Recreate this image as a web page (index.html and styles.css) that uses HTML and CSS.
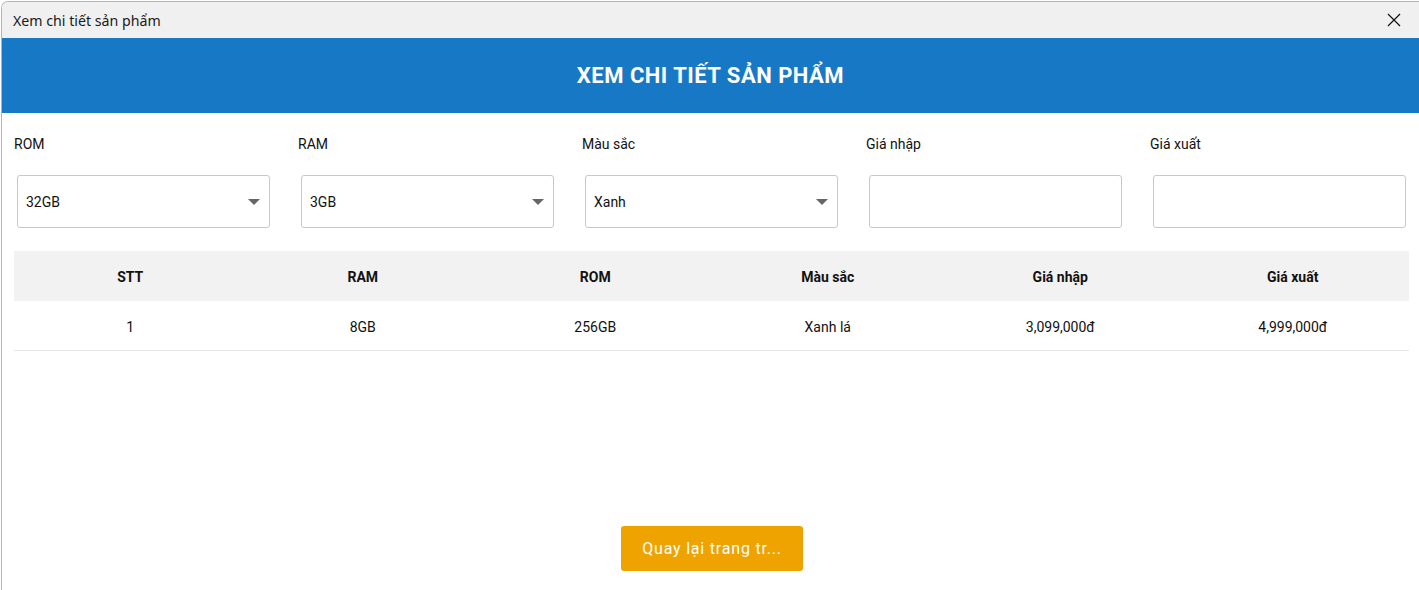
FILE: index.html
```html
<!DOCTYPE html>
<html lang="vi">
<head>
<meta charset="utf-8">
<link rel="stylesheet" href="styles.css">
</head>
<body>
<div class="window">
  <div class="titlebar">
    <span class="title">Xem chi tiết sản phẩm</span>
    <span class="close"><svg width="14" height="14" viewBox="0 0 14 14"><path d="M1 1L13 13M13 1L1 13" stroke="#111" stroke-width="1.2" fill="none"/></svg></span>
  </div>
  <div class="banner">XEM CHI TIẾT SẢN PHẨM</div>
  <div class="content">
    <div class="form">
      <div class="field"><label>ROM</label><div class="box select"><span>32GB</span><i class="caret"></i></div></div>
      <div class="field"><label>RAM</label><div class="box select"><span>3GB</span><i class="caret"></i></div></div>
      <div class="field"><label>Màu sắc</label><div class="box select"><span>Xanh</span><i class="caret"></i></div></div>
      <div class="field"><label>Giá nhập</label><div class="box"></div></div>
      <div class="field"><label>Giá xuất</label><div class="box"></div></div>
    </div>
    <table class="grid">
      <thead>
        <tr><th>STT</th><th>RAM</th><th>ROM</th><th>Màu sắc</th><th>Giá nhập</th><th>Giá xuất</th></tr>
      </thead>
      <tbody>
        <tr><td>1</td><td>8GB</td><td>256GB</td><td>Xanh lá</td><td>3,099,000đ</td><td>4,999,000đ</td></tr>
      </tbody>
    </table>
    <div class="actions"><button class="back">Quay lại trang tr...</button></div>
  </div>
</div>
</body>
</html>
```
FILE: styles.css
```css
html, body {
  margin: 0;
  padding: 0;
  width: 1419px;
  height: 590px;
  overflow: hidden;
  background: #ffffff;
}
body {
  font-family: Roboto, "Noto Sans", sans-serif;
  color: #111;
  padding-left: 1px;
  padding-top: 1px;
  box-sizing: border-box;
}
.window {
  height: 589px;
  border-left: 1px solid #b4b4b4;
  border-top: 1px solid #b4b4b4;
  border-top-left-radius: 7px;
  background: #fff;
  display: flex;
  flex-direction: column;
  overflow: hidden;
}
.titlebar {
  height: 36px;
  flex-shrink: 0;
  background: #f0f0f0;
  display: flex;
  align-items: center;
  justify-content: space-between;
  padding: 0 18px 0 11px;
}
.title {
  font-family: "Noto Sans", "Open Sans", sans-serif;
  font-size: 14.2px;
  color: #1a1a1a;
}
.close {
  display: flex;
  align-items: center;
}
.banner {
  height: 75px;
  flex-shrink: 0;
  background: #1779c6;
  color: #fff;
  font-weight: 700;
  font-size: 22px;
  display: flex;
  align-items: center;
  justify-content: center;
  letter-spacing: 0.5px;
}
.content {
  flex: 1;
  display: flex;
  flex-direction: column;
  padding: 0 9px 0 12px;
}
.form {
  display: flex;
  padding-top: 21px;
}
.field {
  width: 284px;
  flex-shrink: 0;
  display: flex;
  flex-direction: column;
}
.field label {
  font-size: 14px;
  height: 20px;
  line-height: 20px;
  color: #111;
}
.box {
  margin: 21px 0 0 3px;
  width: 253px;
  height: 53px;
  box-sizing: border-box;
  border: 1px solid #c8c8c8;
  border-radius: 3px;
  background: #fff;
  display: flex;
  align-items: center;
  justify-content: space-between;
  padding: 0 9px 0 8px;
  font-size: 14px;
}
.caret {
  width: 0;
  height: 0;
  border-left: 6px solid transparent;
  border-right: 6px solid transparent;
  border-top: 6px solid #666;
}
.grid {
  margin-top: 23px;
  width: 1395px;
  border-collapse: collapse;
  table-layout: fixed;
  font-size: 14px;
}
.grid th {
  background: #f2f2f2;
  height: 50px;
  font-weight: 700;
  text-align: center;
  padding: 2px 0 0 0;
  box-sizing: border-box;
}
.grid td {
  height: 47px;
  text-align: center;
  padding: 2px 0 0 0;
  border-bottom: 1px solid #e6e6e6;
}
.actions {
  display: flex;
  justify-content: center;
  padding-top: 175px;
}
.back {
  width: 182px;
  height: 45px;
  background: #efa300;
  border: none;
  border-radius: 3px;
  color: #fff;
  font-family: Roboto, sans-serif;
  font-size: 16px;
  letter-spacing: 0.8px;
  margin-left: 0;
}
```
